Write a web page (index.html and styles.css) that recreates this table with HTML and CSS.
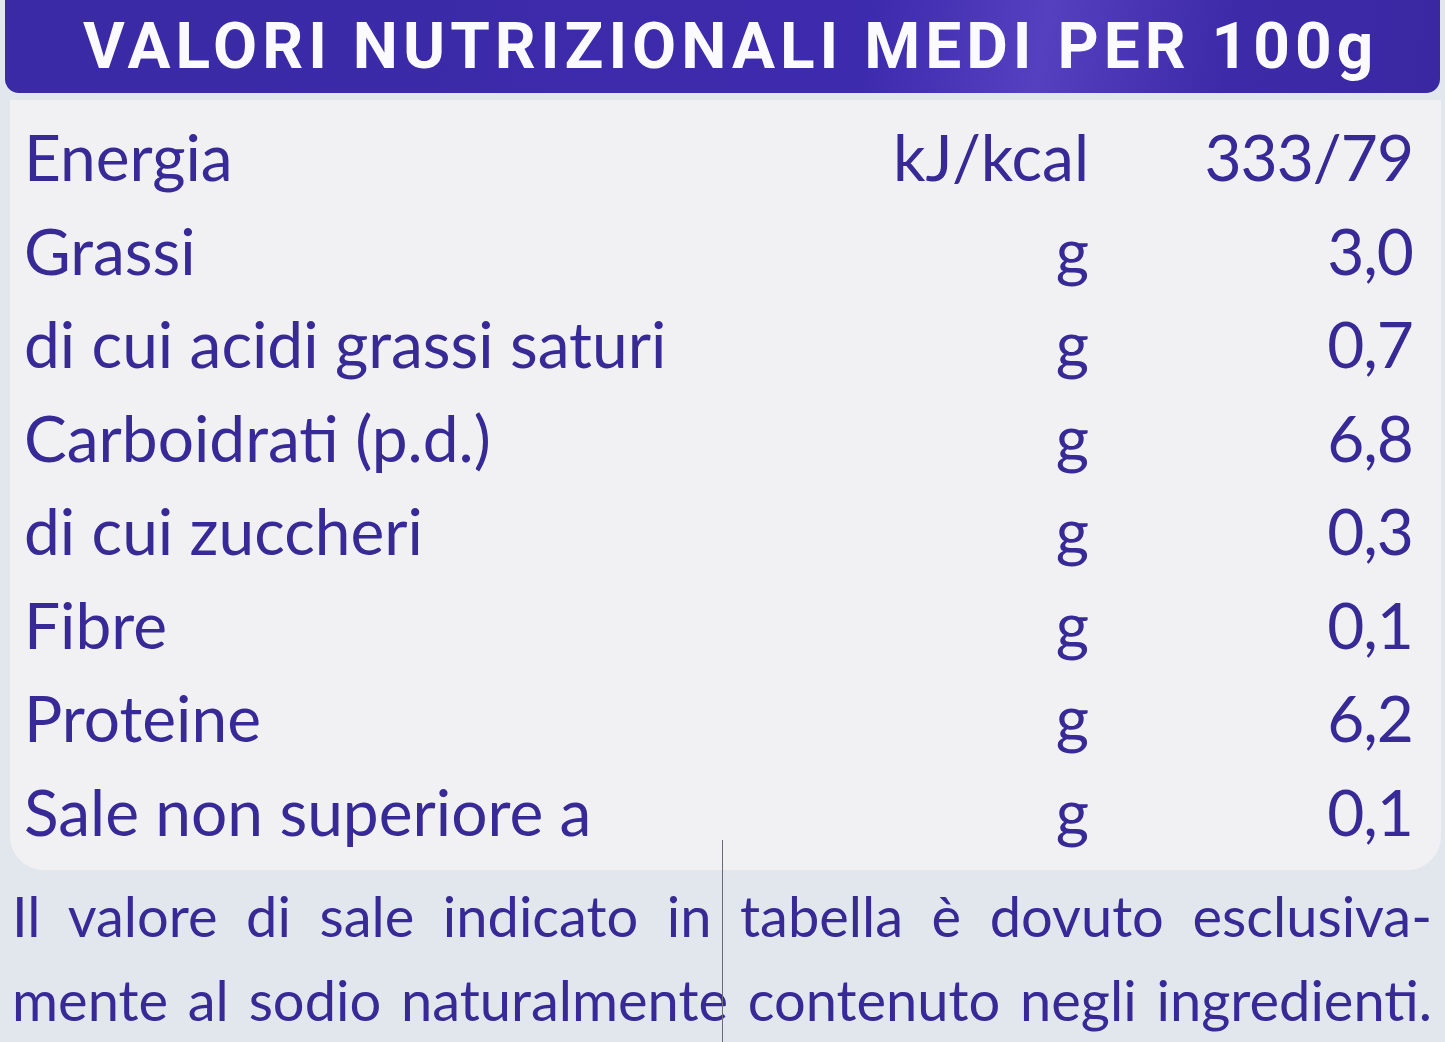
FILE: index.html
```html
<!DOCTYPE html>
<html lang="it">
<head>
<meta charset="utf-8">
<title>Valori nutrizionali</title>
<link rel="stylesheet" href="styles.css">
</head>
<body>
<div class="label">
  <div class="header">VALORI NUTRIZIONALI MEDI PER 100g</div>
  <div class="table">
    <div class="row"><span class="name">Energia</span><span class="unit">kJ/kcal</span><span class="val">333/79</span></div>
    <div class="row"><span class="name">Grassi</span><span class="unit">g</span><span class="val">3,0</span></div>
    <div class="row"><span class="name">di cui acidi grassi saturi</span><span class="unit">g</span><span class="val">0,7</span></div>
    <div class="row"><span class="name">Carboidrati (p.d.)</span><span class="unit">g</span><span class="val">6,8</span></div>
    <div class="row"><span class="name">di cui zuccheri</span><span class="unit">g</span><span class="val">0,3</span></div>
    <div class="row"><span class="name">Fibre</span><span class="unit">g</span><span class="val">0,1</span></div>
    <div class="row"><span class="name">Proteine</span><span class="unit">g</span><span class="val">6,2</span></div>
    <div class="row"><span class="name">Sale non superiore a</span><span class="unit">g</span><span class="val">0,1</span></div>
  </div>
  <div class="note">
    <p class="line">Il valore di sale indicato in tabella è dovuto esclusiva-</p>
    <p class="line">mente al sodio naturalmente contenuto negli ingredienti.</p>
  </div>
  <div class="crease"></div>
</div>
</body>
</html>
```
FILE: styles.css
```css
html, body {
  margin: 0;
  padding: 0;
}
body {
  background: #e2e7ee;
  width: 1445px;
  height: 1042px;
  overflow: hidden;
  font-family: Lato, "Open Sans", sans-serif;
  color: #372a96;
}
.label {
  position: relative;
  height: 1042px;
}
.header {
  margin: 0 5px 0 5px;
  height: 93px;
  background: linear-gradient(100deg, #3a2aa4 0%, #3d2bad 60%, #5540c0 72%, #3d2aa8 85%, #3a28a2 100%);
  border-radius: 0 0 14px 14px;
  color: #fbfbff;
  font-family: Roboto, sans-serif;
  font-weight: 700;
  font-size: 64px;
  line-height: 93px;
  padding-left: 78px;
  box-sizing: border-box;
  white-space: nowrap;
  letter-spacing: 5px;
}
.table {
  margin: 7px 4px 0 10px;
  background: #f1f1f3;
  border-radius: 0 0 34px 34px;
  padding: 10px 0 12px 0;
}
.row {
  display: grid;
  grid-template-columns: 1fr 200px 324px;
  height: 93.5px;
  align-items: center;
  font-size: 64px;
  padding: 0 28px 0 14px;
}
.row .unit, .row .val {
  text-align: right;
}
.row .val {
  letter-spacing: -1px;
}
.note {
  padding: 4px 13px 0 12px;
  font-size: 56px;
}
.line {
  margin: 0;
  line-height: 84px;
  text-align: justify;
  text-align-last: justify;
  white-space: nowrap;
}
.crease {
  position: absolute;
  left: 722px;
  top: 840px;
  width: 1px;
  height: 202px;
  background: #6a6a78;
}
```
